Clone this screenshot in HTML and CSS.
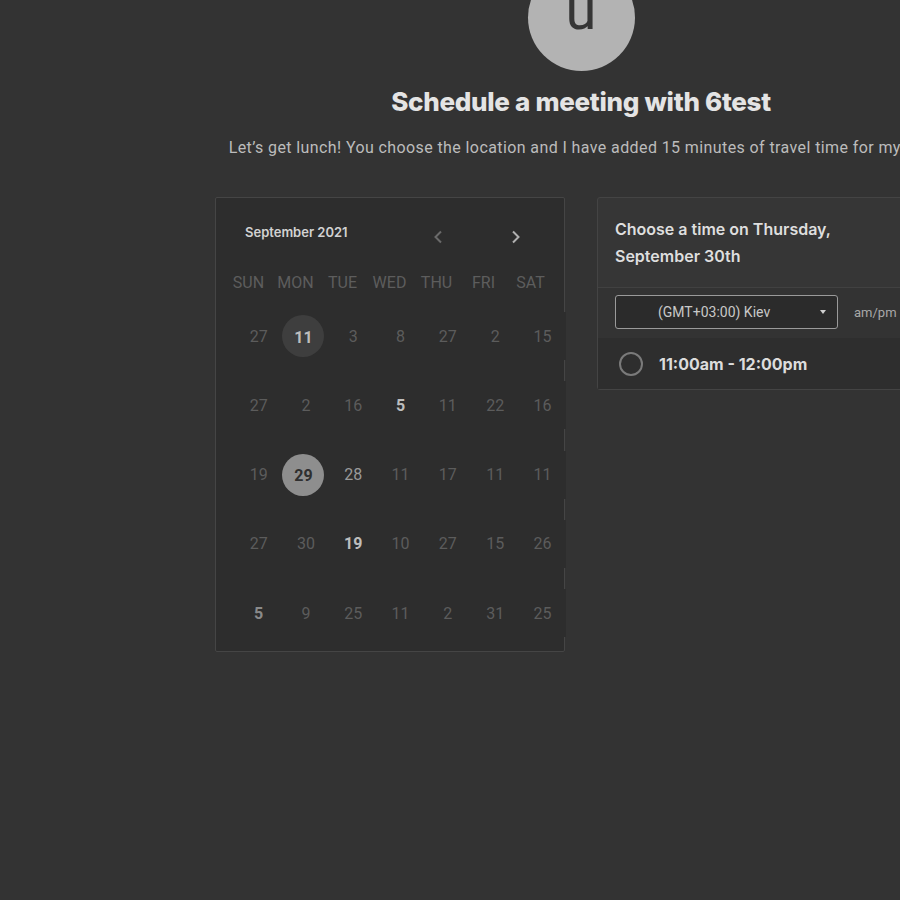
FILE: index.html
```html
<!DOCTYPE html>
<html>
<head>
<meta charset="utf-8">
<link rel="stylesheet" href="styles.css">
</head>
<body>
<div class="page">
  <div class="avatar"><span>u</span></div>
  <h1 class="title">Schedule a meeting with 6test</h1>
  <p class="subtitle">Let’s get lunch! You choose the location and I have added 15 minutes of travel time for myself.</p>
  <div class="panels">
    <section class="calendar">
      <div class="cal-head">
        <span class="month">September 2021</span>
        <span class="nav nav-prev"><svg width="10" height="14" viewBox="0 0 10 14"><path d="M8 1.5 L2.5 7 L8 12.5" fill="none" stroke="currentColor" stroke-width="2"/></svg></span>
        <span class="nav nav-next"><svg width="10" height="14" viewBox="0 0 10 14"><path d="M2 1.5 L7.5 7 L2 12.5" fill="none" stroke="currentColor" stroke-width="2"/></svg></span>
      </div>
      <div class="weekdays">
        <span>SUN</span><span>MON</span><span>TUE</span><span>WED</span><span>THU</span><span>FRI</span><span>SAT</span>
      </div>
      <div class="days">
        <span class="day">27</span><span class="day avail circle-dark"><b>11</b></span><span class="day">3</span><span class="day">8</span><span class="day">27</span><span class="day">2</span><span class="day">15</span>
        <span class="day">27</span><span class="day">2</span><span class="day">16</span><span class="day avail">5</span><span class="day">11</span><span class="day">22</span><span class="day">16</span>
        <span class="day">19</span><span class="day selected"><b>29</b></span><span class="day soft">28</span><span class="day">11</span><span class="day">17</span><span class="day">11</span><span class="day">11</span>
        <span class="day">27</span><span class="day">30</span><span class="day avail">19</span><span class="day">10</span><span class="day">27</span><span class="day">15</span><span class="day">26</span>
        <span class="day mid">5</span><span class="day">9</span><span class="day">25</span><span class="day">11</span><span class="day">2</span><span class="day">31</span><span class="day">25</span>
      </div>
    </section>
    <section class="times">
      <div class="times-head">Choose a time on Thursday,<br>September 30th</div>
      <div class="tz-row">
        <div class="tz-select"><span>(GMT+03:00) Kiev</span><span class="caret"></span></div>
        <span class="ampm">am/pm</span>
      </div>
      <div class="slot">
        <span class="radio"></span>
        <span class="slot-text">11:00am - 12:00pm</span>
      </div>
    </section>
  </div>
</div>
</body>
</html>
```
FILE: styles.css
```css
html, body {
  margin: 0;
  padding: 0;
  background: #333333;
  overflow: hidden;
  height: 900px;
}
.page {
  width: 1162px;
  display: flex;
  flex-direction: column;
  align-items: center;
  font-family: Roboto, "Liberation Sans", sans-serif;
}
.avatar {
  margin-top: -36px;
  width: 107px;
  height: 107px;
  border-radius: 50%;
  background: #b3b3b3;
  display: flex;
  justify-content: center;
  align-items: flex-start;
  overflow: hidden;
}
.avatar span {
  font-family: Roboto, sans-serif;
  font-size: 56px;
  line-height: 56px;
  color: #363636;
  margin-top: 18px;
}
.title {
  margin: 16px 0 0;
  font-family: Inter, sans-serif;
  font-weight: 800;
  font-size: 26px;
  line-height: 30px;
  color: #e4e4e4;
  letter-spacing: -0.3px;
}
.subtitle {
  margin: 21px 0 0;
  font-size: 16px;
  line-height: 20px;
  color: #bcbcbc;
  letter-spacing: 0.4px;
  white-space: nowrap;
}
.panels {
  margin-top: 39px;
  display: flex;
  gap: 32px;
  align-items: flex-start;
}
.calendar {
  box-sizing: border-box;
  width: 350px;
  height: 455px;
  border: 1px solid #454545;
  background: #2d2d2d;
  border-radius: 2px;
}
.cal-head {
  display: flex;
  align-items: center;
  height: 20px;
  margin: 24px 0 0 29px;
}
.month {
  flex-shrink: 0;
  font-family: Inter, sans-serif;
  font-weight: 600;
  font-size: 13px;
  color: #d2d2d2;
  width: 188px;
}
.nav {
  flex-shrink: 0;
  display: flex;
  margin-top: 9px;
  width: 78px;
}
.nav-prev { color: #6a6a6a; }
.nav-next { color: #b0b0b0; }
.weekdays {
  display: grid;
  grid-template-columns: repeat(7, 47px);
  margin: 31px 0 0 9px;
  height: 20px;
  line-height: 20px;
  font-size: 16px;
  color: #5d5d5d;
  text-align: center;
}
.days {
  display: grid;
  grid-template-columns: repeat(7, 47.3px);
  grid-auto-rows: 48px;
  row-gap: 21.3px;
  margin: 19px 0 0 19px;
  width: 331px;
}
.day {
  background: #2d2d2d;
  display: flex;
  align-items: center;
  justify-content: center;
  font-size: 16px;
  color: #5c5c5c;
  position: relative;
}
.day b {
  position: relative;
  z-index: 1;
  font-weight: 700;
}
.day.avail {
  color: #bdbdbd;
  font-weight: 700;
}
.day.soft { color: #9a9a9a; }
.day.mid { color: #8a8a8a; font-weight: 700; }
.day.circle-dark::before,
.day.selected::before {
  content: "";
  position: absolute;
  width: 42px;
  height: 42px;
  border-radius: 50%;
  left: 0px;
  top: 3px;
  z-index: 0;
}
.day.circle-dark::before { background: #3e3e3e; }
.day.selected::before { background: #8e8e8e; }
.day.selected {
  color: #2f2f2f;
}
.day.circle-dark, .day.selected {
  justify-content: flex-start;
  padding-left: 12px;
  padding-top: 2px;
  box-sizing: border-box;
}
.times {
  box-sizing: border-box;
  width: 350px;
  border: 1px solid #444444;
  border-radius: 3px;
  background: #363636;
}
.times-head {
  padding: 18px 17px 17px;
  font-family: Inter, sans-serif;
  font-weight: 600;
  font-size: 16px;
  line-height: 27px;
  color: #dedede;
  border-bottom: 1px solid #414141;
}
.tz-row {
  display: flex;
  align-items: center;
  gap: 16px;
  padding: 7px 17px 9px;
  background: #333333;
}
.tz-select {
  box-sizing: border-box;
  width: 223px;
  height: 34px;
  border: 1px solid #9a9a9a;
  border-radius: 3px;
  background: #2b2b2b;
  display: flex;
  align-items: center;
  font-size: 14px;
  color: #c8c8c8;
  position: relative;
}
.tz-select span:first-child {
  margin-left: 42px;
}
.caret {
  position: absolute;
  right: 11px;
  top: 14px;
  width: 0;
  height: 0;
  border-left: 3.5px solid transparent;
  border-right: 3.5px solid transparent;
  border-top: 4px solid #d0d0d0;
}
.ampm {
  font-size: 13px;
  color: #a8a8a8;
}
.slot {
  display: flex;
  align-items: center;
  height: 51px;
  padding-left: 21px;
  background: #2e2e2e;
}
.radio {
  box-sizing: border-box;
  width: 24px;
  height: 24px;
  border-radius: 50%;
  border: 2px solid #7a7a7a;
}
.slot-text {
  margin-left: 16px;
  font-family: Inter, sans-serif;
  font-weight: 700;
  font-size: 16px;
  color: #dcdcdc;
}
```
